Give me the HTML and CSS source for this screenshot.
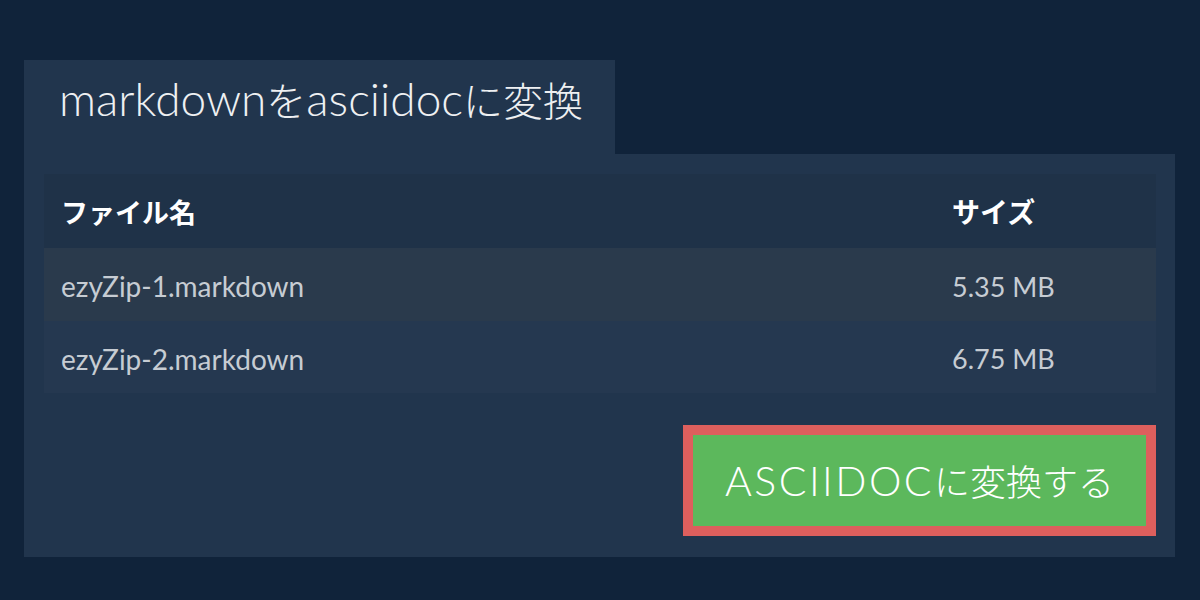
FILE: index.html
```html
<!DOCTYPE html>
<html lang="ja">
<head>
<meta charset="utf-8">
<title>markdownをasciidocに変換</title>
<link rel="stylesheet" href="styles.css">
</head>
<body>
<main class="page">
  <div class="tab"><h1 class="title">markdown<span class="ja">を</span>asciidoc<span class="ja">に変換</span></h1></div>
  <section class="panel">
    <div class="table">
      <div class="row head"><div class="c-name">ファイル名</div><div class="c-size">サイズ</div></div>
      <div class="row odd"><div class="c-name">ezyZip-1.markdown</div><div class="c-size">5.35 MB</div></div>
      <div class="row even"><div class="c-name">ezyZip-2.markdown</div><div class="c-size">6.75 MB</div></div>
    </div>
    <div class="actions"><button class="convert"><span class="latin">ASCIIDOC</span><span class="ja">に変換する</span></button></div>
  </section>
</main>
</body>
</html>
```
FILE: styles.css
```css
html, body { margin: 0; padding: 0; }
body {
  background: #10233a;
  width: 1200px;
  height: 600px;
  overflow: hidden;
  font-family: Lato, "Noto Sans CJK JP", sans-serif;
}
.page {
  padding: 60px 0 0 24px;
}
.tab {
  width: 591px;
  height: 94px;
  background: #21354d;
  display: flex;
  align-items: center;
  box-sizing: border-box;
  padding: 0 0 16px 35px;
}
.title {
  margin: 0;
  font-weight: 300;
  font-size: 46px;
  line-height: 1;
  color: #eef0f2;
  white-space: nowrap;
}
.title .ja {
  font-size: 40px;
}
.panel {
  width: 1151px;
  height: 403px;
  box-sizing: border-box;
  padding: 20px 19px 20px 20px;
  background: #21354d;
  display: flex;
  flex-direction: column;
}
.table {
  width: 1112px;
  display: flex;
  flex-direction: column;
}
.row {
  display: flex;
  align-items: center;
  height: 73px;
  box-sizing: border-box;
  padding-left: 17px;
  color: #c6ccd3;
  font-size: 28px;
}
.row.head {
  height: 74px;
  background: #1f3248;
  color: #ffffff;
  font-weight: 700;
  font-size: 27px;
}
.row.odd { background: #2a3a4c; padding-top: 3px; }
.row.even { background: #253850; height: 72px; padding-top: 3px; }
.c-name { width: 891px; }
.c-size { flex: 1; font-size: 27px; }
.row.head .c-size { font-size: 28px; }
.actions {
  display: flex;
  justify-content: flex-end;
  margin-top: 32px;
}
.convert {
  width: 473px;
  height: 111px;
  box-sizing: border-box;
  border: 10px solid #dd5f5d;
  background: #5cb85c;
  color: #ffffff;
  font-family: Lato, "Noto Sans CJK JP", sans-serif;
  font-weight: 300;
  padding: 0;
  line-height: 1;
  white-space: nowrap;
  cursor: pointer;
}
.convert .latin {
  font-size: 41px;
  letter-spacing: 2.5px;
}
.convert .ja {
  font-size: 36px;
}
```
